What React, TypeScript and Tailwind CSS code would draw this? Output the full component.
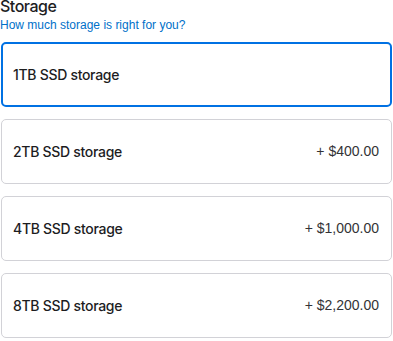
import React from "react";

const options = [
  { label: "1TB SSD storage", price: "", selected: true },
  { label: "2TB SSD storage", price: "+ $400.00", selected: false },
  { label: "4TB SSD storage", price: "+ $1,000.00", selected: false },
  { label: "8TB SSD storage", price: "+ $2,200.00", selected: false },
];

const App: React.FC = () => {
  return (
    <div className="w-[393px] h-[341px] overflow-hidden bg-white font-['Inter',sans-serif] text-[#1d1d1f]">
      <div className="-mt-[3px]">
        <h2 className="text-[16px] leading-[18px] font-medium tracking-[-0.5px]">Storage</h2>
        <p className="mt-[2px] text-[12px] leading-[16px] text-[#0070c9] font-['Liberation_Sans',sans-serif]">
          How much storage is right for you?
        </p>
      </div>
      <ul className="flex flex-col gap-3 mt-[9px] px-px">
        {options.map((opt) => (
          <li
            key={opt.label}
            className={
              opt.selected
                ? "h-[65px] flex items-center justify-between rounded-[5px] border-2 border-[#0071e3] pl-[10px] pr-[11px]"
                : "h-[65px] flex items-center justify-between rounded-[5px] border border-[#d2d2d7] pl-[11px] pr-[12px]"
            }
          >
            <span className="text-[14px] font-medium tracking-[-0.3px]">{opt.label}</span>
            {opt.price && (
              <span className="text-[14px] text-[#333336] font-['Liberation_Sans',sans-serif]">{opt.price}</span>
            )}
          </li>
        ))}
      </ul>
    </div>
  );
};

export default App;
